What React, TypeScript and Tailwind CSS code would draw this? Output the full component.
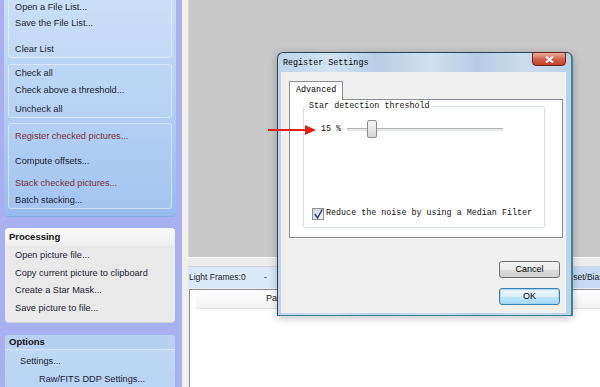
import clsx from "clsx";

const sans = "font-['Liberation_Sans',Arial,sans-serif]";
const mono = "font-['Liberation_Mono','Courier_New',monospace]";

type ItemProps = { label: string; red?: boolean; className?: string };

const Item = ({ label, red, className }: ItemProps) => (
  <div
    className={clsx(
      "h-[16px] leading-[16px] whitespace-nowrap",
      red ? "text-[#7d2e37]" : "text-[#1b2233]",
      className
    )}
  >
    {label}
  </div>
);

const Sidebar = () => {
  return (
    <div className={clsx("w-[182px] shrink-0 bg-[#a9b0ef] pl-[4px] pr-[6px] text-[9.2px]", sans)}>
      {/* file list / check / stack group */}
      <div className="-mt-[10px] pt-[4px] pb-[7px] rounded-b-[4px] border-b border-[#88acdf] bg-gradient-to-b from-[#c9def7] via-[#b3d0f4] to-[#96bcee]">
        <div className="mx-[4px] pt-[4px] pl-[6px] border border-[#deebfa] rounded-[3px] bg-[#cde1f8]/40">
          <Item label="Open a File List..." />
          <Item label="Save the File List..." />
          <Item label="Clear List" className="mt-[10px]" />
        </div>
        <div className="mx-[4px] mt-[6px] pl-[6px] border border-[#d8e7f9] rounded-[3px] bg-[#c4dcf6]/30">
          <Item label="Check all" />
          <Item label="Check above a threshold..." className="mt-[1px]" />
          <Item label="Uncheck all" className="mt-[3px]" />
        </div>
        <div className="mx-[4px] mt-[5px] pt-[4px] pl-[6px] border border-[#d2e4f8] rounded-[3px] bg-[#bcd6f4]/30">
          <Item label="Register checked pictures..." red />
          <Item label="Compute offsets..." className="mt-[9px]" />
          <Item label="Stack checked pictures..." red className="mt-[6px]" />
          <Item label="Batch stacking..." className="mt-[1px]" />
        </div>
      </div>

      {/* Processing */}
      <div className="mx-[1px] mt-[11px] pb-[6px] rounded-[4px] bg-[#e9e9e9] border-b border-[#d4d4d4]">
        <div className="h-[18px] flex items-center pl-[4px] rounded-t-[4px] bg-gradient-to-b from-[#fbfbfb] to-[#eeeeee] font-bold text-[9.5px] text-[#111]">
          Processing
        </div>
        <div className="pl-[10px]">
          <Item label="Open picture file..." className="mt-[1px]" />
          <Item label="Copy current picture to clipboard" className="mt-[2px]" />
          <Item label="Create a Star Mask..." className="mt-[1px]" />
          <Item label="Save picture to file..." className="mt-[2px]" />
        </div>
      </div>

      {/* Options */}
      <div className="mx-[1px] mt-[12px] h-[60px] rounded-t-[4px] bg-gradient-to-b from-[#c3daf6] to-[#b6d2f3]">
        <div className="h-[15px] flex items-center pl-[4px] rounded-t-[4px] border-b border-[#d6e6f9] bg-[#b7d1f2] font-bold text-[9.5px] text-[#111]">
          Options
        </div>
        <Item label="Settings..." className="mt-[3px] pl-[15px]" />
        <Item label="Raw/FITS DDP Settings..." className="mt-[2px] pl-[34px]" />
      </div>
    </div>
  );
};

const MainArea = () => {
  return (
    <div className={clsx("flex-1 flex flex-col bg-[#efefef] pl-[6px] text-[8.5px] text-[#1a1a1a]", sans)}>
      <div className="h-[257px] shrink-0 bg-[#c8c8c8] border-l border-[#d9d9d9]" />
      <div className="h-[10px] shrink-0 border-t border-white bg-[#ececec] border-b border-b-[#d4d4d4]" />
      <div className="h-[21px] shrink-0 flex items-center bg-[#dbe8f7]">
        <span className="w-[76px] pl-[1px] whitespace-nowrap">Light Frames:0</span>
        <span>-</span>
        <span className="ml-[12px] whitespace-nowrap">Dark Frames:0</span>
        <span className="ml-auto w-[44px] h-full flex items-center pl-[6px] bg-[#c6daf3] whitespace-nowrap overflow-hidden">
          Offset/Bias:0
        </span>
      </div>
      <div className="flex-1 ml-[1px] mt-[1px] border-l border-t border-[#8a8d94] bg-white">
        <div className="h-[19px] flex items-center bg-gradient-to-b from-white to-[#f2f2f2] border-b border-[#e2e2e2] ml-[6px]">
          <span className="pl-[70px] text-[9px]">Path</span>
        </div>
      </div>
    </div>
  );
};

const Dialog = () => {
  return (
    <div className="absolute left-[277px] top-[52px] w-[296px] h-[264px] flex flex-col rounded-t-[6px] border border-[#2a4452] border-r-[2px] border-r-[#3c8393] border-b-[#3b7d8d] bg-[linear-gradient(90deg,#bdd3e8_0%,#d3e3f1_18%,#b6cde4_34%,#d0e1f0_52%,#b4cce3_68%,#cbddee_84%,#bad1e7_100%)] pb-[2px] shadow-[0_2px_8px_rgba(0,0,0,0.25)]">
      <div className={clsx("h-[19px] shrink-0 flex items-center pl-[5px] pt-[2px] text-[8.4px] text-black", mono)}>
        Register Settings
      </div>
      <div className="absolute -top-[1px] right-[5px] w-[34px] h-[14px] rounded-b-[4px] rounded-t-[2px] border border-[#6a2418] bg-gradient-to-b from-[#eab0a0] via-[#d4624c] to-[#c2412c] flex items-center justify-center">
        <svg width="9" height="7" viewBox="0 0 9 7">
          <path d="M1 0.5 L8 6.5 M8 0.5 L1 6.5" stroke="#fff" strokeWidth="2" />
        </svg>
      </div>
      <div className="h-[241px] shrink-0 ml-[3px] mr-[5px] bg-[#f0f0f0] flex flex-col">
        <div className={clsx("ml-[8px] mt-[9px] relative z-10 w-[54px] h-[19px] flex items-center pl-[6px] pb-[2px] border border-b-0 border-[#8c8f97] bg-white text-[8.4px] text-black", mono)}>
          Advanced
        </div>
        <div className="ml-[8px] -mt-[1px] w-[274px] h-[139px] border border-[#8c8f97] bg-white">
          <div className={clsx("relative ml-[13px] mt-[6px] w-[242px] h-[122px] flex flex-col border border-[#d8dfe4] rounded-[3px] text-[8.4px] text-[#111]", mono)}>
            <span className="absolute -top-[6px] left-[3px] px-[2px] bg-white leading-[11px] whitespace-nowrap">
              Star detection threshold
            </span>
            <div className="mt-[13px] h-[18px] flex items-center pl-[17px]">
              <span className="w-[20px] whitespace-nowrap">15 %</span>
              <div className="relative ml-[6px] w-[156px] h-[3px] border-t border-[#b2b2b2] bg-[#e6e9ea]">
                <div className="absolute left-[20px] -top-[9px] w-[10px] h-[18px] rounded-[2px] border border-[#8b8b8b] bg-gradient-to-b from-[#f4f4f4] to-[#d6d6d6]" />
              </div>
            </div>
            <div className="mt-auto mb-[7px] flex items-center pl-[8px] gap-[2px]">
              <div className="w-[12px] h-[12px] border border-[#8e8f8f] bg-gradient-to-br from-[#cfd5e2] to-[#f2f4f8] flex items-center justify-center">
                <svg width="9" height="10" viewBox="0 0 9 10">
                  <path d="M0.8 5 L3.5 9 L8.2 0.5" fill="none" stroke="#27357a" strokeWidth="1.4" />
                </svg>
              </div>
              <span className="whitespace-nowrap">Reduce the noise by using a Median Filter</span>
            </div>
          </div>
        </div>
        <button className={clsx("self-end mr-[6px] mt-[23px] w-[61px] h-[17px] rounded-[3px] border border-[#707070] bg-[linear-gradient(#f3f3f3_0%,#ebebeb_50%,#dddddd_51%,#cfcfcf_100%)] text-[9px] text-black", sans)}>
          Cancel
        </button>
        <button className={clsx("self-end mr-[6px] mt-[10px] w-[61px] h-[17px] rounded-[3px] border border-[#3c7fb1] bg-[linear-gradient(#eaf6fd_0%,#d9f0fc_50%,#bee6fd_51%,#a7d9f5_100%)] shadow-[inset_0_0_0_1px_#9fd5f3] text-[9px] text-black", sans)}>
          OK
        </button>
      </div>
    </div>
  );
};

const App = () => {
  return (
    <div className="relative w-[600px] h-[387px] flex overflow-hidden bg-[#a9b0ef]">
      <Sidebar />
      <MainArea />
      <Dialog />
      <svg className="absolute left-[268px] top-[124px]" width="50" height="12" viewBox="0 0 50 12">
        <path d="M0 6 L40 6" stroke="#e3201b" strokeWidth="2" />
        <polygon points="37,1 48,6 37,11" fill="#e3201b" />
      </svg>
    </div>
  );
};

export default App;
